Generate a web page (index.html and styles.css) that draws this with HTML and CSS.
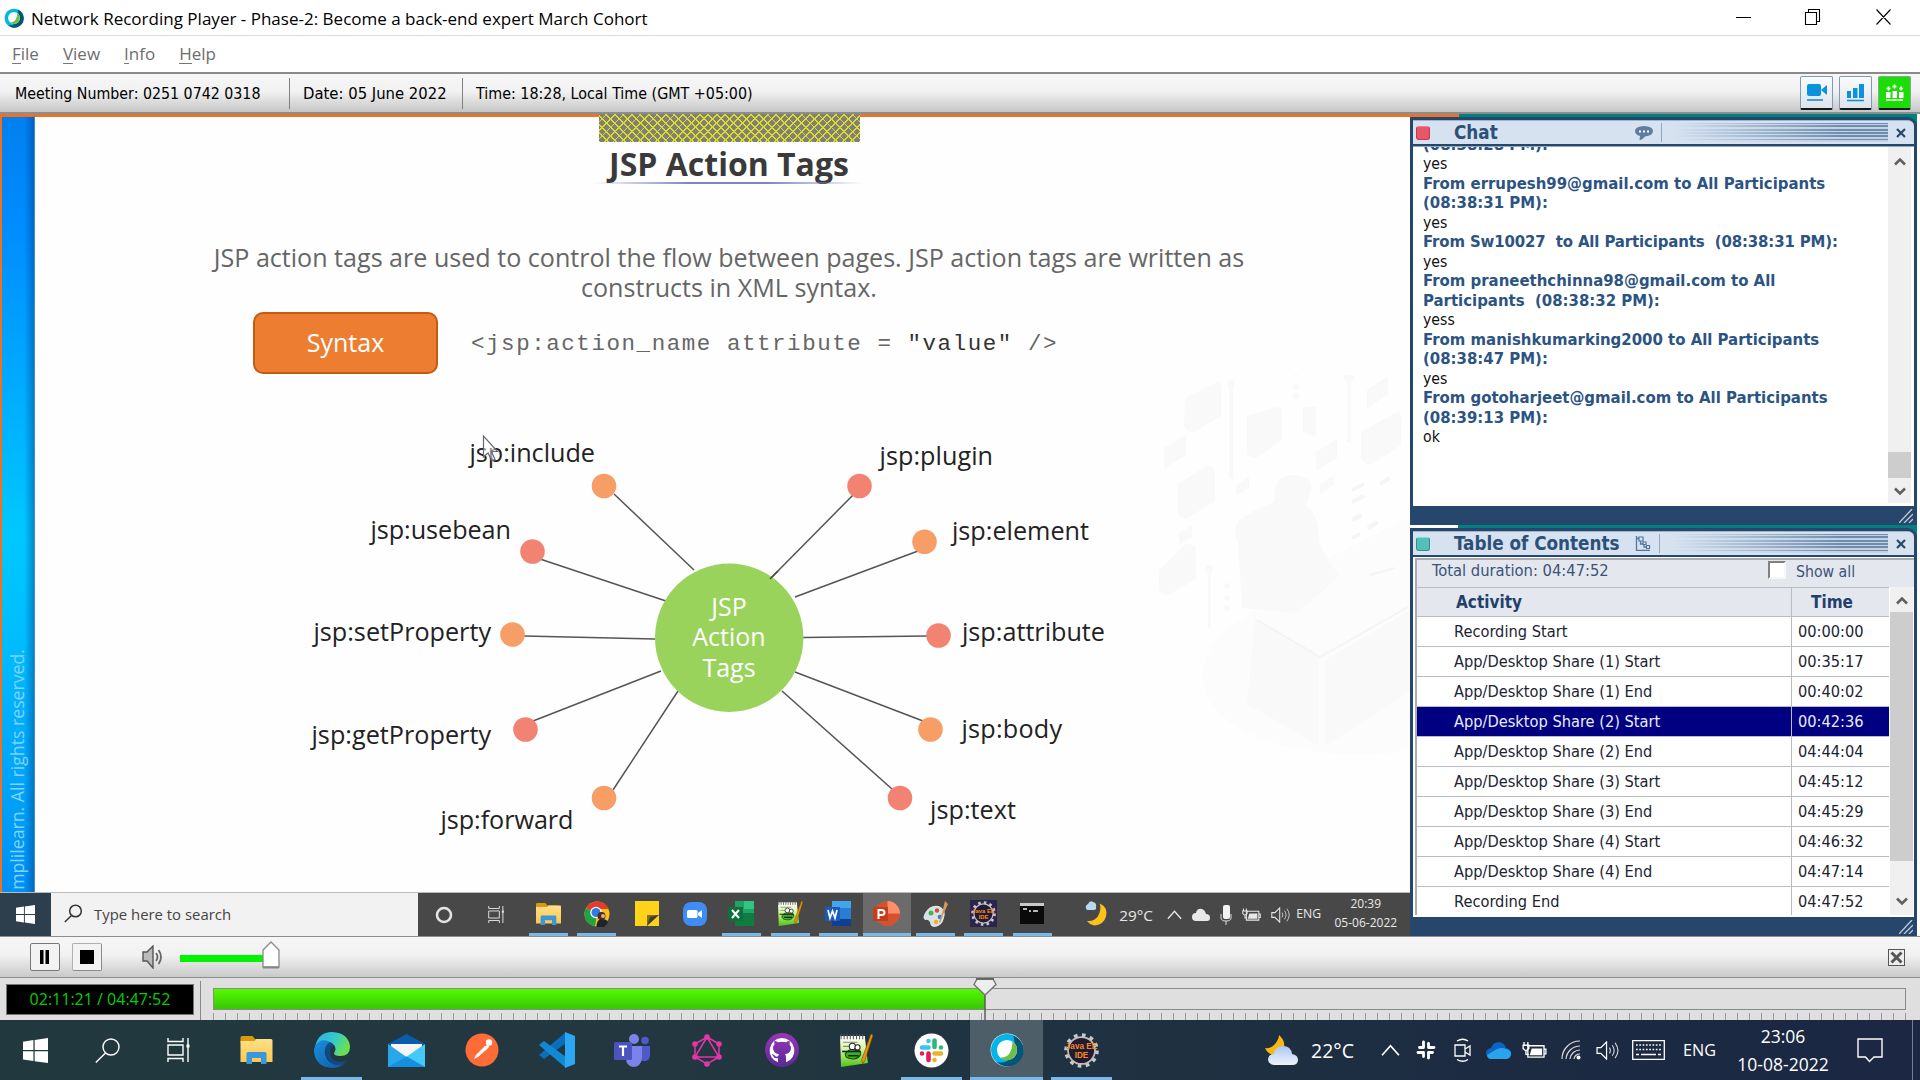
FILE: index.html
```html
<!DOCTYPE html>
<html lang="en">
<head>
<meta charset="utf-8">
<title>Network Recording Player</title>
<link rel="stylesheet" href="styles.css">
</head>
<body>
<svg class="defs" width="0" height="0">
  <defs>
    <linearGradient id="g-folder" x1="0" y1="0" x2="0" y2="1"><stop offset="0" stop-color="#ffe08a"/><stop offset="1" stop-color="#fbc84d"/></linearGradient>
    <linearGradient id="g-edge" x1="0" y1="0" x2="1" y2="0.4"><stop offset="0" stop-color="#2aaeea"/><stop offset=".6" stop-color="#35cbc8"/><stop offset="1" stop-color="#6be04e"/></linearGradient>
    <linearGradient id="g-edge2" x1="0" y1="0" x2="1" y2="1"><stop offset="0" stop-color="#1b8fe0"/><stop offset="1" stop-color="#0c59a4"/></linearGradient>
    <linearGradient id="g-cloud" x1="0" y1="0" x2="0" y2="1"><stop offset="0" stop-color="#a9c6f5"/><stop offset="1" stop-color="#f0f3f8"/></linearGradient>
    <linearGradient id="g-note" x1="0" y1="0" x2="0" y2="1"><stop offset="0" stop-color="#ffffff"/><stop offset=".4" stop-color="#d9f7a0"/><stop offset="1" stop-color="#4cc417"/></linearGradient>
    <linearGradient id="g-git" x1="0" y1="0" x2="0" y2="1"><stop offset="0" stop-color="#9a35b8"/><stop offset="1" stop-color="#5a2a94"/></linearGradient>
  </defs>
  <symbol id="i-windows" viewBox="0 0 24 24"><path d="M0 3.500 10 2v9.500H0zM11.200 1.800 24 0v11.500H11.200zM0 12.700h10V22L0 20.600zM11.200 12.700H24V24l-12.800-1.800z" fill="#fff"/></symbol>
  <symbol id="i-taskview" viewBox="0 0 24 24"><path d="M1 0v3.500h15V0M1 24v-3.500h15V24M1 7h15v10H1zM21 0v24" fill="none" stroke="currentColor" stroke-width="1.400"/><path d="M19.500 6.500h3v3h-3z" fill="currentColor"/></symbol>
  <symbol id="i-folder" viewBox="0 0 32 28"><path d="M0 1.500Q0 0 1.500 0H12l2.500 3H28v4H0z" fill="#d99a0b"/><path d="M0 5h14l2-2h14.500Q32 3 32 4.500V26H0z" fill="url(#g-folder)"/><path d="M6 28V17.500Q6 16 7.500 16h17q1.500 0 1.500 1.500V28h-5.500v-6h-9v6z" fill="#3a96dd"/></symbol>
  <symbol id="i-npp" viewBox="0 0 32 32"><path d="M0 2h24l3 26-26 4z" fill="url(#g-note)"/><path d="M0 2h24v3H0z" fill="#fff"/><path d="M1 0v5M4 0v5M7 0v5M10 0v5M13 0v5M16 0v5M19 0v5M22 0v5" stroke="#555" stroke-width="1"/><path d="M3 8h14M3 12h9" stroke="#888" stroke-width="1"/><path d="M5 19q5-6 10-3 6-1 5 4-3 5-9 4-6 0-6-5z" fill="#3fae1a" stroke="#184d08"/><circle cx="12" cy="12" r="3" fill="#fff" stroke="#222"/><circle cx="17" cy="13" r="2.500" fill="#fff" stroke="#222"/><path d="M2 17h18M8 21h10" stroke="#123" stroke-width="1.500"/><path d="m30 0 2 1-8 25-2 3-1-4z" fill="#e8940c" stroke="#7a4a08" stroke-width=".6"/></symbol>
  <symbol id="i-eclipse" viewBox="0 0 32 32"><circle cx="16" cy="16" r="14" fill="none" stroke="#c9c9c9" stroke-width="3.600" stroke-dasharray="3.300 4.030"/><circle cx="16" cy="16" r="12.300" fill="#231b33" stroke="#bdbdbd" stroke-width="1.600"/><text x="16" y="15" text-anchor="middle" class="gear-text">Java EE</text><text x="16" y="22.500" text-anchor="middle" class="gear-text">IDE</text></symbol>
  <symbol id="i-moon" viewBox="0 0 24 24"><path d="M15 0q9 4 7 14-3 10-13 10-5-1-8-5 8 1 12-5 4-7 2-14z" fill="#fcc21b"/></symbol>
  <symbol id="i-speaker" viewBox="0 0 24 20"><path d="M1 7v6h4l6 6V1L5 7z" fill="none" stroke="currentColor" stroke-width="1.300"/><path d="M14 7q2 3 0 6M17 4.500q4 5.500 0 11M20 2q6 8 0 16" fill="none" stroke="currentColor" stroke-width="1.200" stroke-opacity=".8"/></symbol>
  <symbol id="i-battery" viewBox="0 0 26 20"><path d="M6 5h17v12H6zM23 8.500h2v5h-2z" fill="none" stroke="currentColor" stroke-width="1.400"/><path d="M10 8h11v7H8z" fill="currentColor"/><path d="M2 1v4M6 1v4M1 4.500h6V8L4 10.500 1 8zM4 10v4h3" fill="none" stroke="currentColor" stroke-width="1.400"/></symbol>
  <symbol id="i-chev" viewBox="0 0 18 12"><path d="m1 10.500 8-9 8 9" fill="none" stroke="currentColor" stroke-width="1.600"/></symbol>
  <symbol id="i-arrow" viewBox="0 0 12 9"><path d="M1 7.500 6 2.500l5 5" fill="none" stroke="#606060" stroke-width="2.600"/></symbol>
  <symbol id="i-webex" viewBox="0 0 32 32"><circle cx="16" cy="16" r="15.500" fill="#d9eef5"/><circle cx="16" cy="16" r="15" fill="#00b5e8"/><path d="M22 2.500A15 15 0 1 1 6 27q9 3 14-5t2-19.500z" fill="#065477"/><circle cx="16" cy="16" r="9.500" fill="#fff"/><path d="M21 8A9.500 9.500 0 1 1 9.500 23q7 0 9.500-5t2-10z" fill="#6cc04a"/></symbol>
  <symbol id="i-grip" viewBox="0 0 14 14"><path d="M0 14 13 0M5 14l9-9M10 14l4-4" stroke="#b9c8d8" stroke-width="1.400"/></symbol>
  <symbol id="i-x" viewBox="0 0 10 10"><path d="m1 1 8 8M9 1 1 9" stroke="#26476b" stroke-width="2.200"/></symbol>
</svg>

<div class="screen">
  <header class="titlebar">
    <svg class="app-icon" viewBox="0 0 32 32" width="20" height="20"><use href="#i-webex"/></svg>
    <span class="app-title">Network Recording Player - Phase-2: Become a back-end expert March Cohort</span>
    <svg class="window-controls" width="160" height="16" viewBox="0 0 160 16"><path d="M0 8.500h15M69.500 3.500h11v12h-11zM72.500 3.500v-3h11v12h-3M140.500.5l14 15M154.500.5l-14 15" fill="none" stroke="#000" stroke-width="1.100"/></svg>
  </header>

  <nav class="menubar"><span><u>F</u>ile</span><span><u>V</u>iew</span><span><u>I</u>nfo</span><span><u>H</u>elp</span></nav>

  <div class="infobar">
    <span class="info info-number">Meeting Number: 0251 0742 0318</span>
    <span class="info info-date">Date: 05 June 2022</span>
    <span class="info info-time">Time: 18:28, Local Time (GMT +05:00)</span>
    <div class="tools">
      <span class="tool"><svg width="22" height="18" viewBox="0 0 22 18"><rect x="1" y="0" width="14" height="12" rx="2" fill="#0a93dc"/><path d="m15 6 6-5v10z" fill="#0a93dc"/><path d="M1 16h16" stroke="#0a93dc" stroke-width="1.600"/></svg></span>
      <span class="tool"><svg width="20" height="18" viewBox="0 0 20 18"><path d="M1 7h4v7H1zM7 4h4.500v10H7zM13 0h5v14h-5z" fill="#0a93dc"/><path d="M1 16.500h17" stroke="#0a93dc" stroke-width="1.600"/></svg></span>
      <span class="tool tool-on"><svg width="20" height="18" viewBox="0 0 20 18"><path d="M1 8h4.500v6H1zM7.500 7H12v7H7.500zM14 8h4.500v6H14z" fill="#fff"/><path d="M1 16h17M1.500 4.500h4M3.500 2.500v4M7.500 2.500h4M9.500.5v4M14 4.500h4M16 2.500v4" stroke="#fff" stroke-width="1.600"/></svg></span>
    </div>
  </div>

  <main class="stage">
    <section class="share">
      <div class="slide-row">
        <aside class="strip"><span>mplilearn. All rights reserved.</span></aside>
        <article class="slide">
          <div class="hatch"></div>
          <h1>JSP Action Tags</h1>
          <div class="rule"></div>
          <p class="lead">JSP action tags are used to control the flow between pages. JSP action tags are written as<br>constructs in XML syntax.</p>
          <div class="syntax"><span class="syntax-tag">Syntax</span><code>&lt;jsp:action_name attribute = <b>"value"</b> /&gt;</code></div>
          <svg class="diagram" viewBox="35 375 1375 517" width="1375" height="517">
            <g fill="#f9f9f9">
              <path d="M1185 398l32-16q4 0 4 4v30l-28 17q-8-2-9-8zM1247 416l30-9q5 0 5 5v28l-26 18q-9-1-9-6zM1361 432l38-21 2 6v28l-30 20q-9-2-10-8zM1178 484l28-18q8 0 9 5v30l-29 18q-8-2-8-6zM1159 570l28-27q9 2 9 6v30l-28 16q-9-2-9-7z"/>
              <path d="M1164 448l22-13v20l-22 14zM1367 390l21-14v18l-21 15zM1316 452l21-13v19l-21 13zM1236 486l13-10v12l-13 8zM1320 484l14-9v10l-14 9zM1179 533l13-8v12l-13 8zM1303 407h13v28q-8 2-13-3zM1229 387h4v92h-4zM1347 370h4v72h-4zM1208 572h3v56h-3z"/>
              <circle cx="1231" cy="384" r="4"/><circle cx="1349" cy="377" r="5"/><circle cx="1209" cy="569" r="4"/><circle cx="1296" cy="374" r="3"/><circle cx="1296" cy="387" r="3"/><circle cx="1296" cy="396" r="3"/><circle cx="1227" cy="586" r="3"/><circle cx="1227" cy="598" r="3"/><circle cx="1227" cy="608" r="3"/>
            </g>
            <path d="M1202 672q6-36 43-54l80-58 85-44v234q-60 10-117-2-90-20-91-76z" fill="#fcfcfc"/>
            <path d="M1275 502q-4-26 18-27 20 2 18 12l-5 20q12 4 13 34l9 20 12 14-22 20-22 18-54-5-4-66q-8-18 6-25 14-10 31-15zM1255 620l64 38v88l-72-42zM1325 660l85-50v82l-85 54z" fill="#f9f9f9"/>
            <path d="M1257 620l63 37 88-50M1370 575l25-7" fill="none" stroke="#f4f4f4" stroke-width="2"/>
            <path d="M1352 490l12-6M1352 502l12-6M1380 484l10-6M1352 520l10-5M1352 538l8-4M1368 528l10-6" stroke="#f5f5f5" stroke-width="4"/>
            <path d="M614 494 694 570M540 559l126 42M524 636l131 3M533 721l128-50M613 790l65-99M854 494l-84 85M918 551l-123 46M927 636l-124 1.500M923 721l-128-49M892 789 782 691" fill="none" stroke="#555" stroke-width="1.500"/>
            <circle cx="729.200" cy="637.700" r="74.200" fill="#9ad35c"/>
            <path d="m770 579 8-8" stroke="#444" stroke-width="1.500"/>
            <g fill="#f69e66"><circle cx="604" cy="486" r="12.300"/><circle cx="512.500" cy="634.500" r="12.300"/><circle cx="604" cy="798" r="12.300"/><circle cx="924.500" cy="541.800" r="12.300"/><circle cx="930.500" cy="729.500" r="12.300"/></g>
            <g fill="#f28373"><circle cx="532.500" cy="551.500" r="12.300"/><circle cx="525.500" cy="729.500" r="12.300"/><circle cx="859.500" cy="486" r="12.300"/><circle cx="938.500" cy="635.500" r="12.300"/><circle cx="900" cy="798" r="12.300"/></g>
            <g class="hub"><text x="729" y="615.500">JSP</text><text x="729" y="646">Action</text><text x="729" y="676.700">Tags</text></g>
            <g class="label">
              <text x="469.500" y="462" textLength="125.500">jsp:include</text>
              <text x="370.500" y="539" textLength="140.500">jsp:usebean</text>
              <text x="313.500" y="641" textLength="177.500">jsp:setProperty</text>
              <text x="311.500" y="744" textLength="179.500">jsp:getProperty</text>
              <text x="440.500" y="828.500" textLength="133">jsp:forward</text>
              <text x="879.500" y="464.500" textLength="113.500">jsp:plugin</text>
              <text x="952" y="540" textLength="137">jsp:element</text>
              <text x="962" y="640.500" textLength="143">jsp:attribute</text>
              <text x="961.500" y="737.500" textLength="100.500">jsp:body</text>
              <text x="930" y="819" textLength="86">jsp:text</text>
            </g>
            <path d="M483.500 436v21l4.500-4 4 8 3-1.500-3.500-8h6z" fill="#fff" fill-opacity=".5" stroke="#667" stroke-width="1.200"/>
          </svg>
        </article>
      </div>

      <div class="remote-bar">
        <span class="remote-start"><svg width="19" height="19"><use href="#i-windows"/></svg></span>
        <span class="remote-search"><svg width="19" height="19" viewBox="0 0 19 19"><circle cx="11.500" cy="7" r="5.800" fill="none" stroke="#333" stroke-width="1.500"/><path d="M7.500 11.500.8 18" stroke="#333" stroke-width="1.500"/></svg>Type here to search</span>
        <span class="remote-wide"><svg width="18" height="18"><circle cx="9" cy="9" r="7" fill="none" stroke="#e4e4e4" stroke-width="2.600"/></svg></span>
        <span class="remote-wide"><svg width="19" height="17"><use href="#i-taskview"/></svg></span>
        <span class="remote-app open"><svg width="25" height="22"><use href="#i-folder"/></svg></span>
        <span class="remote-app open"><svg width="26" height="26" viewBox="0 0 26 26"><circle cx="13" cy="13" r="12.500" fill="#fbc116"/><path d="M13 13 2 7A12.500 12.500 0 0 1 24.500 8H13z" fill="#e33b2e"/><path d="M13 13 2 7a12.500 12.500 0 0 0 9 18.300z" fill="#1ea446"/><circle cx="12" cy="11.500" r="5.800" fill="#fff"/><circle cx="12" cy="11.500" r="4.500" fill="#2d7ce8"/><circle cx="17.500" cy="15" r="4" fill="#4a2c22"/><path d="M12.500 26q0-8 5.500-8t6 4l-4 4z" fill="#1c2430"/><circle cx="19" cy="15" r="2" fill="#dfaf90"/></svg></span>
        <span class="remote-app nudge"><svg width="24" height="25" viewBox="0 0 24 25"><path d="M0 0h24v25H0z" fill="#ffd21c"/><path d="M12 25V14h12z" fill="#3d3d3d"/><path d="M12 25V14h12l-9 2z" fill="#866e13"/></svg></span>
        <span class="remote-app nudge"><svg width="24" height="24" viewBox="0 0 24 24"><rect width="24" height="24" rx="8" fill="#3f8cf5"/><rect x="4" y="8" width="10.500" height="8" rx="1.500" fill="#fff"/><path d="m15 11 4-3v8l-4-3z" fill="#fff"/></svg></span>
        <span class="remote-app open"><svg width="27" height="25" viewBox="0 0 27 25"><path d="M7 0h19v25H7z" fill="#21a366"/><path d="M7 12h19v13H7z" fill="#107c41"/><path d="M16 0h10v8H16z" fill="#33c481"/><path d="M0 6h15v14H0z" fill="#0f703b"/><path d="m4 9 7 8M11 9l-7 8" stroke="#fff" stroke-width="2"/></svg></span>
        <span class="remote-app open"><svg width="25" height="27"><use href="#i-npp"/></svg></span>
        <span class="remote-app open"><svg width="27" height="25" viewBox="0 0 27 25"><path d="M7 0h19v25H7z" fill="#2b7cd3"/><path d="M7 0h19v7H7z" fill="#41a5ee"/><path d="M7 18h19v7H7z" fill="#103f91"/><path d="M0 6h15v14H0z" fill="#185abd"/><path d="m3 9 2 8 2.500-7 2.500 7 2-8" fill="none" stroke="#fff" stroke-width="1.700"/></svg></span>
        <span class="remote-app open current"><svg width="27" height="25" viewBox="0 0 27 25"><circle cx="14.500" cy="12.500" r="12.500" fill="#d35230"/><path d="M14.500 0A12.500 12.500 0 0 1 27 12.500H14.500z" fill="#ff8f6b"/><path d="M0 6h15v14H0z" fill="#c43e1c"/><path d="M5.500 18V9h3q3 0 3 2.500T8.500 14h-3" fill="none" stroke="#fff" stroke-width="2"/></svg></span>
        <span class="remote-app open"><svg width="27" height="26" viewBox="0 0 27 26"><path d="M3 12Q8 3 17 5q8 4 5 12-2 8-9 9-5 0-5-5-2-3-5-2-3-2 0-7z" fill="#d9e2e6"/><circle cx="9" cy="12" r="2.500" fill="#4caf50"/><circle cx="15" cy="9.500" r="2.200" fill="#d84a3a"/><circle cx="18" cy="16" r="2.300" fill="#2f80d0"/><circle cx="14" cy="21" r="2.200" fill="#f2b21b"/><path d="m23 0 3 3-5 11-3 8-1-1 3-9z" fill="#d79a56"/></svg></span>
        <span class="remote-app open"><svg width="27" height="27" viewBox="0 0 27 27"><path d="M0 0h27v27H0z" fill="#2b2350"/><svg x="1" y="1" width="25" height="25"><use href="#i-eclipse"/></svg></svg></span>
        <span class="remote-app open"><svg width="24" height="21" viewBox="0 0 24 21"><path d="M0 0h24v21H0z" fill="#0a0a0a"/><path d="M0 0h24v3H0z" fill="#c8c8c8"/><path d="M3 6h4M9 8h2M13 8h5" stroke="#eee" stroke-width="1.500"/></svg></span>
        <span class="remote-weather"><svg width="24" height="29" viewBox="0 0 24 29"><svg y="1" x="1" width="22" height="27"><use href="#i-moon"/></svg><path d="M2 10q-3-4 1-6 2-4 5-2 4 1 3 5 1 3-2 3z" fill="#b9d9ec"/></svg><span>29°C</span></span>
        <span class="remote-tray">
          <svg width="15" height="10"><use href="#i-chev"/></svg>
          <svg width="18" height="14" viewBox="0 0 18 14"><path d="M4 13q-4 0-4-4t4-4q1-5 6-4 3 1 4 5 4 0 4 4 0 3-3 3z" fill="#e8e8e8"/></svg>
          <svg width="12" height="20" viewBox="0 0 12 20"><rect x="3" width="7" height="14" rx="2" fill="#f2f2f2"/><path d="M1 9v4q0 3 5 3t5-3V9M6 16v4" fill="none" stroke="#ddd"/></svg>
          <svg width="19" height="16"><use href="#i-battery"/></svg>
          <svg width="19" height="16"><use href="#i-speaker"/></svg>
        </span>
        <span class="remote-lang">ENG</span>
        <span class="remote-clock">20:39<br>05-06-2022</span>
      </div>
    </section>

    <aside class="panels">
      <section class="panel chat">
        <header class="panel-head">
          <i class="dot dot-red"></i><h2>Chat</h2>
          <svg class="head-icon" width="18" height="14" viewBox="0 0 18 14"><path d="M9 0q9 .5 9 5t-8 5.500Q7 14 4.500 14L5 10Q0 8.500 0 5q0-4.500 9-5z" fill="#5f7d9e"/><path d="M4 5.500h2M8 5.500h2M12 5.500h2" stroke="#fff" stroke-width="2"/></svg>
          <i class="bars"></i><svg class="close" width="10" height="10"><use href="#i-x"/></svg>
        </header>
        <div class="chat-body">
          <div class="messages">
            <div class="message-list">
              <b>(08:38:28 PM):</b><span>yes</span>
              <b>From errupesh99@gmail.com to All Participants<br>(08:38:31 PM):</b><span>yes</span>
              <b class="tight">From Sw10027&nbsp; to All Participants&nbsp; (08:38:31 PM):</b><span>yes</span>
              <b>From praneethchinna98@gmail.com to All<br>Participants&nbsp; (08:38:32 PM):</b><span>yess</span>
              <b>From manishkumarking2000 to All Participants<br>(08:38:47 PM):</b><span>yes</span>
              <b>From gotoharjeet@gmail.com to All Participants<br>(08:39:13 PM):</b><span>ok</span>
            </div>
          </div>
          <div class="scroll chat-scroll"><svg width="12" height="9"><use href="#i-arrow"/></svg><i></i><svg class="down" width="12" height="9"><use href="#i-arrow"/></svg></div>
        </div>
        <footer class="panel-foot"><svg width="14" height="14"><use href="#i-grip"/></svg></footer>
      </section>

      <section class="panel toc">
        <header class="panel-head">
          <i class="dot dot-teal"></i><h2>Table of Contents</h2>
          <svg class="head-icon toc-icon" width="16" height="15" viewBox="0 0 16 15"><path d="M1.500 0v14.500H15M1 2.500h4M5.500 5v3h3M9 8v3h3" fill="none" stroke="#54779c" stroke-width="1.300"/><path d="M4 1h4v4H4zM8 6h3v2.500H8zM11.500 9.500h3v3h-3z" fill="#dce6f2" stroke="#54779c" stroke-width="1.200"/></svg>
          <i class="bars"></i><svg class="close" width="10" height="10"><use href="#i-x"/></svg>
        </header>
        <div class="toc-body">
          <div class="summary"><span class="total">Total duration: 04:47:52</span><i class="check"></i><span class="show">Show all</span></div>
          <div class="toc-main">
            <div class="rows">
              <div class="row head"><span>Activity</span><span>Time</span></div>
              <div class="row"><span>Recording Start</span><span>00:00:00</span></div>
              <div class="row"><span>App/Desktop Share (1) Start</span><span>00:35:17</span></div>
              <div class="row"><span>App/Desktop Share (1) End</span><span>00:40:02</span></div>
              <div class="row selected"><span>App/Desktop Share (2) Start</span><span>00:42:36</span></div>
              <div class="row"><span>App/Desktop Share (2) End</span><span>04:44:04</span></div>
              <div class="row"><span>App/Desktop Share (3) Start</span><span>04:45:12</span></div>
              <div class="row"><span>App/Desktop Share (3) End</span><span>04:45:29</span></div>
              <div class="row"><span>App/Desktop Share (4) Start</span><span>04:46:32</span></div>
              <div class="row"><span>App/Desktop Share (4) End</span><span>04:47:14</span></div>
              <div class="row"><span>Recording End</span><span>04:47:52</span></div>
            </div>
            <div class="scroll toc-scroll"><svg width="12" height="9"><use href="#i-arrow"/></svg><i></i><svg class="down" width="12" height="9"><use href="#i-arrow"/></svg></div>
          </div>
        </div>
        <footer class="panel-foot"><svg width="14" height="14"><use href="#i-grip"/></svg></footer>
      </section>
    </aside>
  </main>

  <div class="controls">
    <span class="button"><svg width="12" height="14"><path d="M1 0h3.500v14H1zM6.500 0H10v14H6.500z"/></svg></span>
    <span class="button"><svg width="14" height="14"><path d="M0 0h14v14H0z"/></svg></span>
    <svg class="volume-icon" width="22" height="24" viewBox="0 0 22 24"><path d="M1 7v9h4l6 7V1L5 7z" fill="#bbb" stroke="#555" stroke-width="1.400"/><path d="M14 8q3 4 0 8M16.500 5q5 7 0 14" fill="none" stroke="#666" stroke-width="1.800"/></svg>
    <span class="volume"></span>
    <svg class="volume-thumb" width="18" height="28" viewBox="0 0 18 28"><path d="M1 9 9 1l8 8v17H1z" fill="#fff" stroke="#8a8a8a" stroke-width="1.300"/><path d="M1 26.500h16" stroke="#888" stroke-width="2"/></svg>
    <span class="dock-close"><svg width="13" height="13" viewBox="0 0 13 13"><path d="m1.500 1.500 10 10M11.500 1.500l-10 10" stroke="#555" stroke-width="3"/></svg></span>
  </div>

  <div class="timeline">
    <span class="time">02:11:21 / 04:47:52</span>
    <div class="seek">
      <div class="trough"><div class="fill" style="width:45.600%"></div></div>
      <div class="ticks"></div>
      <svg class="playhead" width="24" height="42" viewBox="0 0 24 42"><path d="M12 17v25" stroke="#555" stroke-width="1.400"/><path d="M1 6.500 4 1h16l3 5.500L12 17z" fill="#eee" stroke="#777" stroke-width="1.400"/><path d="M3 1h18" stroke="#666" stroke-width="2"/></svg>
    </div>
  </div>

  <footer class="taskbar">
    <span class="sys"><svg width="25" height="25"><use href="#i-windows"/></svg></span>
    <span class="sys"><svg width="25" height="25" viewBox="0 0 25 25"><circle cx="16" cy="9" r="8" fill="none" stroke="#fff" stroke-width="1.400"/><path d="M10.500 15 .8 24.500" stroke="#fff" stroke-width="1.400"/></svg></span>
    <span class="sys"><svg width="26" height="24"><use href="#i-taskview"/></svg></span>
    <span class="app"><svg width="33" height="28"><use href="#i-folder"/></svg></span>
    <span class="app open"><svg width="36" height="36" viewBox="0 0 36 36"><path d="M1 15Q4 0 18 0q17 1 18 15 0 9-10 9-6 0-6-3 3-4 0-8-5-5-12-3-4 1-7 5z" fill="url(#g-edge)"/><path d="M1 14q6-9 15-4-6 4-5 12 3 12 16 11l4-2q-5 5-13 5Q2 35 0 20q0-4 1-6z" fill="url(#g-edge2)"/><path d="M16 10q-6 4-4 13 4 11 15 10 3-1 6-5-3 2-8 2-9-1-9-10 0-4 3-6 0-3-3-4z" fill="#114a8b"/></svg></span>
    <span class="app"><svg width="37" height="33" viewBox="0 0 37 33"><path d="M0 10 18.500 0 37 10v10H0z" fill="#0b5cad"/><path d="M3 10h31v9L18.500 24 3 19z" fill="#f5f5f5"/><path d="m0 10 18.500 13L37 10v23H0z" fill="#28a8ea"/><path d="m18.500 22.500 18.500-12V33z" fill="#50d9ff" opacity=".7"/><path d="m0 33 18.500-10.500L37 33z" fill="#1490df"/></svg></span>
    <span class="app"><svg width="34" height="34" viewBox="0 0 34 34"><circle cx="17" cy="17" r="16.500" fill="#ff6c37"/><path d="m9 26 2-4 9-9 2.500 2.500L13 24z" fill="#fff"/><circle cx="24" cy="9.500" r="3.200" fill="#fff"/><path d="m19 13.500 4-1.500 1 2-3 3z" fill="#fff"/></svg></span>
    <span class="app"><svg width="36" height="36" viewBox="0 0 36 36"><path d="M27 0v11L5 27l-5-4z" fill="#0a6ebd"/><path d="M27 36V25L5 9l-5 4z" fill="#1287d4"/><path d="m26 0 10 4v28l-10 4z" fill="#2ba7f4"/></svg></span>
    <span class="app"><svg width="36" height="33" viewBox="0 0 36 33"><circle cx="20" cy="5" r="5" fill="#7b83eb"/><circle cx="31" cy="6.500" r="3.800" fill="#5059c9"/><path d="M24 12h12v10q-1 6-7 5h-5z" fill="#5059c9"/><path d="M12 12h16v12q-1 9-9 9-7-1-7-9z" fill="#7b83eb"/><rect y="8" width="18" height="18" rx="1.500" fill="#4b53bc"/><path d="M5 12.500h8M9 12.500V22" stroke="#fff" stroke-width="2.200"/></svg></span>
    <span class="app"><svg width="30" height="33" viewBox="0 0 30 33"><path d="m15 3 12 7v13l-12 7-12-7V10zM15 3 3 23h24z" fill="none" stroke="#e535ab" stroke-width="1.500"/><g fill="#e535ab"><circle cx="15" cy="3" r="2.800"/><circle cx="27" cy="10" r="2.800"/><circle cx="27" cy="23" r="2.800"/><circle cx="15" cy="30" r="2.800"/><circle cx="3" cy="23" r="2.800"/><circle cx="3" cy="10" r="2.800"/></g></svg></span>
    <span class="app"><svg width="34" height="34" viewBox="0 0 34 34"><circle cx="17" cy="17" r="17" fill="url(#g-git)"/><path d="M17 5a12.500 12.500 0 0 0-4 24.300v-4q-4 .5-5-2.500l-1.500-1.500q2-.5 3.500 1.500 1 1.500 3 .5l1-2q-6-1-6-6.500 0-2 1.500-3.500-.5-2 0-3.500 1.500 0 3.500 1.500 4-1 8 0 2-1.500 3.500-1.500.5 2 0 3.500 1.500 1.500 1.500 3.500 0 5.500-6 6.500 1 1 1 3v5A12.500 12.500 0 0 0 17 5z" fill="#fff"/></svg></span>
    <span class="app"><svg width="33" height="33"><use href="#i-npp"/></svg></span>
    <span class="app open"><svg width="35" height="35" viewBox="0 0 35 35"><circle cx="17.500" cy="17.500" r="17" fill="#fff"/><g fill="none" stroke-width="4.600" stroke-linecap="round"><path d="M14.500 8v0M8 14.500h6.500" stroke="#36c5f0"/><path d="M20.500 7.500v6.500M27 14.500v0" stroke="#2eb67d"/><path d="M20.500 27v0M20.500 20.500H27" stroke="#ecb22e"/><path d="M14.500 20.500V27M8 20.500v0" stroke="#e01e5a"/></g></svg></span>
    <span class="app open active"><svg width="34" height="34"><use href="#i-webex"/></svg></span>
    <span class="app open"><svg width="35" height="35"><use href="#i-eclipse"/></svg></span>
    <div class="tray">
      <span class="weather"><svg width="34" height="31" viewBox="0 0 34 31"><path d="M14 0q8 7 4 16L8 20Q2 18 0 13q6 1 10-4t4-9z" fill="#f9b710"/><path d="M9 30q-6-1-6-6 1-5 6-5 1-8 9-8t9 8q6 1 6 6t-6 5z" fill="url(#g-cloud)"/></svg>22°C</span>
      <span class="t-chev"><svg width="19" height="13"><use href="#i-chev"/></svg></span>
      <span class="t-slack"><svg width="20" height="20" viewBox="0 0 20 20"><path d="M7.500 2v5.500M12.500 3.500v4M3.500 7.500h4M12.500 7.500H18M2 12.500h5.500M12.500 12.500h4M7.500 12.500v4M12.500 12.500V18" stroke="#fff" stroke-width="2.800" stroke-linecap="round"/></svg></span>
      <span class="t-cam"><svg width="18" height="24" viewBox="0 0 18 24"><path d="M1 7h10v11H1zM11 11l5-3v9l-5-3M3 3q6-3.500 11 0M3 21.500q6 3.500 11 0" fill="none" stroke="#fff" stroke-width="1.300"/></svg></span>
      <span class="t-drive"><svg width="25" height="17" viewBox="0 0 25 17"><path d="M5 16q-5-1-5-5t5-5q2-6 8-6 6 1 7 6 5 1 5 5t-4 5z" fill="#0a64c0"/><path d="M4 17q-3-1-3-4l10-6q5-2 9 0 5 1 5 5t-4 5z" fill="#2aa3ee"/></svg></span>
      <span class="t-battery"><svg width="25" height="19"><use href="#i-battery"/></svg></span>
      <span class="t-wifi"><svg width="20" height="20" viewBox="0 0 20 20"><path d="M1 19A18 18 0 0 1 19 1M5 19A14 14 0 0 1 19 6M9 19a10 10 0 0 1 10-9M13 19q1-5 6-5" fill="none" stroke="#ddd" stroke-width="1.200"/><circle cx="17.500" cy="17.500" r="2" fill="#fff"/></svg></span>
      <span class="t-speaker"><svg width="23" height="19"><use href="#i-speaker"/></svg></span>
      <span class="t-keyboard"><svg width="33" height="20" viewBox="0 0 33 20"><path d="M.7.7h31.600v18.600H.7z" fill="none" stroke="#fff" stroke-width="1.300"/><path d="M4 5h25M4 9.500h25" stroke="#fff" stroke-width="1.600" stroke-dasharray="1.700 1.600"/><path d="M4 14.500h3M9 14.500h15M26 14.500h3" stroke="#fff" stroke-width="1.500"/></svg></span>
      <span class="t-lang">ENG</span>
      <span class="t-clock">23:06<br>10-08-2022</span>
      <span class="t-note"><svg width="26" height="25" viewBox="0 0 26 25"><path d="M1 1h24v18h-8l-4.500 4.500L8.500 19H1z" fill="none" stroke="#fff" stroke-width="1.400"/></svg></span>
      <i class="peek"></i>
    </div>
  </footer>
</div>
</body>
</html>
```
FILE: styles.css
```css
* { box-sizing: border-box; }
body { margin: 0; background: #fff; overflow: hidden; }
svg { display: block; flex: none; }
.defs { position: absolute; }
h1, h2, p { margin: 0; }

.screen {
  width: 1920px; height: 1080px;
  display: grid; grid-template-rows: 36px 36px 42px 822px 42px 42px 60px;
  font-family: "Open Sans", "Noto Sans", sans-serif;
  color: #000;
}

/* Window chrome */
.titlebar { display: flex; align-items: center; padding: 0 28px 0 4px; border-bottom: 1px solid #dedede; }
.app-icon { margin: 0 7px 0 0; }
.app-title { flex: 1; font-size: 17.03px; line-height: 34px; padding-top: 2px; }
.window-controls { margin-right: -4px; margin-top: -2px; }
.menubar { display: flex; gap: 24px; padding: 5px 12px; font-size: 17px; line-height: 26px; color: #6d6d6d; }
.menubar u { text-decoration: none; height: 23px; display: inline-block; line-height: 26px; border-bottom: 1.500px solid #777; }

.infobar {
  display: flex; align-items: center; padding: 0 9px 0 0;
  border-top: 2px solid #8a8a8a; border-bottom: 2px solid #8d8d8d;
  background: linear-gradient(#f6f6f6 0, #f2f2f2 45%, #c6c6c6 100%);
  font-family: "DejaVu Sans Condensed", "DejaVu Sans", sans-serif; font-size: 15.8px; font-stretch: condensed;
}
.info { height: 31px; line-height: 32px; padding-left: 13px; }
.info-number { width: 290px; padding-left: 15px; border-right: 1px solid #808080; }
.info-date { width: 173px; border-right: 1px solid #808080; font-size: 16.5px; }
.info-time { font-size: 15.9px; }
.tools { display: flex; gap: 6px; margin-left: auto; }
.tool {
  width: 33px; height: 34px; display: grid; place-items: center;
  border: 1px solid #7f9ab5; border-bottom: 2px solid #101820; border-radius: 2px;
  background: linear-gradient(#fafbff, #dfe3ea);
}
.tool-on { background: #1ddd08; border-color: #7fb08a; border-bottom-color: #101820; }

/* Shared screen */
.stage { display: grid; grid-template-columns: 1410px 510px; }
.share { display: grid; grid-template-rows: 779px 43px; min-width: 0; }
.slide-row { display: grid; grid-template-columns: 35px 1375px; min-height: 0; border-bottom: 1px solid #bbb; }
.strip {
  border-left: 2px solid #f0701e; border-top: 3px solid #f0701e; border-right: 1px solid #3b8fc8;
  background:
    linear-gradient(90deg, transparent 70%, rgba(0, 50, 120, .4)),
    linear-gradient(#0080f0, #008cff 14%, #00c8ff 54%, #00bcff 68%, #0090f4 100%);
  display: flex; align-items: flex-end; justify-content: flex-start; padding: 0 0 2px 4px;
}
.strip span { writing-mode: vertical-rl; transform: rotate(180deg); font-size: 17.7px; line-height: 22px; color: #7fd3fb; white-space: nowrap; }
.slide { display: flex; flex-direction: column; align-items: center; min-height: 0; overflow: hidden; background: linear-gradient(#e8742c, #e8742c) 0 0 / 100% 3px no-repeat #fefefe; }
.hatch {
  width: 261px; height: 28px; margin-left: 14px; flex: none;
  background:
    repeating-linear-gradient(45deg, #dede1c 0 1.300px, transparent 1.300px 6px),
    repeating-linear-gradient(-45deg, #dede1c 0 1.300px, transparent 1.300px 6px), #7f7f7f;
}
.slide h1 { margin-left: 13px; height: 40px; line-height: 44px; font-size: 32px; color: #3a3a3a; }
.rule { width: 270px; height: 2px; margin: 0 0 1px 10px; flex: none; background: linear-gradient(90deg, transparent, #8085c0 35%, #8085c0 65%, transparent); }
.lead { margin: 57px 0 0 13px; height: 61px; font-size: 25.1px; line-height: 30.3px; text-align: center; color: #666; white-space: nowrap; }
.syntax { display: flex; align-items: center; align-self: stretch; gap: 33px; margin: 8px 0 1px 218px; height: 63px; flex: none; }
.syntax-tag { width: 185px; height: 62px; display: grid; place-items: center; border: 2px solid #c55a11; border-radius: 10px; background: #ed7d31; color: #fff; font-size: 25px; line-height: 56px; padding-bottom: 2px; }
.syntax code { font: 22.5px "Liberation Mono", monospace; letter-spacing: 1.55px; color: #666; white-space: pre; padding-top: 2px; }
.syntax code b { font-weight: normal; color: #333; }
.diagram { font-size: 25.2px; }
.diagram .label { fill: #222; }
.diagram .hub { fill: #fff; text-anchor: middle; font-size: 25px; }
.gear-text { font: bold 7.500px "Liberation Sans", sans-serif; fill: #f78b1f; }

/* Taskbar inside the shared screen */
.remote-bar { display: flex; align-items: stretch; background: #484848; color: #e8e8e8; font-size: 15px; }
.remote-start { width: 51px; display: grid; place-items: center; background: #2d3f4d; }
.remote-search { width: 367px; display: flex; align-items: center; gap: 11px; padding: 0 0 2px 13px; background: #f2f2f2; color: #444; font-size: 14.9px; }
.remote-wide { width: 52px; display: grid; place-items: center; color: #ddd; }
.remote-wide + .remote-app { margin-left: 2px; }
.remote-app { width: 48.4px; display: grid; place-items: center; background: linear-gradient(#76b9ed, #76b9ed) 50% 40px / 0 3px no-repeat; padding-bottom: 2px; }
.remote-app.open { background-size: 39px 3px; }
.remote-app.current { background-color: #6b6b6b; background-size: 100% 3px; }
.remote-app.nudge { padding-left: 4px; }
.remote-weather { display: flex; align-items: center; gap: 10px; margin-left: 29px; width: 82px; font-size: 15.3px; }
.remote-tray { display: flex; align-items: center; gap: 10px; width: 124px; }
.remote-lang { margin-left: 5px; width: 30px; font-size: 12.2px; line-height: 41px; }
.remote-clock { width: 79px; font-size: 12px; line-height: 19px; text-align: center; padding-top: 1px; white-space: nowrap; }

/* Side panels */
.panels {
  display: grid; grid-template-rows: 408px 408px; gap: 3px; padding: 3px 3px 0 0;
  background:
    linear-gradient(#e8742c, #e8742c) 0 0 / 49px 3px no-repeat,
    linear-gradient(#fff, #fff) 0 0 / 48px 100% no-repeat,
    linear-gradient(#fff, #fff) 100% 0 / 3px 100% no-repeat, #008080;
  font-family: "DejaVu Sans Condensed", "DejaVu Sans", sans-serif; font-stretch: condensed;
}
.panel { display: grid; grid-template-rows: 24px 1fr 19px; padding: 3px 3px 0; background: #26476b; min-height: 0; border-top-right-radius: 9px; }
.panel-head { display: flex; align-items: center; background: #d6e2f0; border-top: 1px solid #9db4cc; border-top-right-radius: 6px; }
.dot { width: 14px; height: 14px; margin-left: 3px; border-radius: 3px; flex: none; }
.dot-red { background: #e8566a; border: 1px solid #c43950; border-top-color: #f08090; }
.dot-teal { background: #52bfb8; border: 1px solid #318f8b; border-top-color: #80dcd4; }
.panel h2 { width: 181px; margin-left: 24px; font-size: 18.7px; line-height: 22px; color: #2c5078; white-space: nowrap; }
.bars {
  flex: 1; align-self: stretch; margin: 2px 8px 2px 8px; border-left: 1px solid #8fa7c0;
  background: linear-gradient(90deg, #d6e2f0 5%, transparent 80%), repeating-linear-gradient(#6d8cae 0 1px, #c2d2e3 1px 2.500px, #6d8cae 2.500px 3.300px);
}
.close { margin-right: 8px; }
.panel-foot { display: flex; justify-content: flex-end; align-items: flex-start; padding: 3px 1px 0; }

.chat-body { display: grid; grid-template-columns: 1fr 23px; margin-top: 2px; padding: 0 3px 3px 0; background: #fff; min-height: 0; border-top: 1px solid #8fa7c0; }
.messages { display: flex; flex-direction: column; overflow: hidden; min-height: 0; font-size: 15.7px; line-height: 19.5px; }
.message-list { display: flex; flex-direction: column; margin: -12.500px 0 0 10px; white-space: nowrap; color: #111; }
.message-list b { font-size: 16.6px; color: #2c5482; }
.message-list .tight { letter-spacing: -.12px; }
.scroll { display: flex; flex-direction: column; align-items: center; background: #f0f0f0; padding: 10px 0 7px; }
.scroll i { width: 100%; background: #cdcdcd; }
.scroll .down { transform: rotate(180deg); margin-top: auto; }
.chat-scroll i { height: 26px; margin-top: 286px; }

.toc-body { display: flex; flex-direction: column; margin-top: 2px; background: #fff; padding: 1px 0 2px 2px; min-height: 0; }
.summary { height: 29px; display: flex; flex: none; border: 2px solid #a9adb3; border-width: 2px 0 0 2px; background: #e4e8ee; font-size: 16.4px; line-height: 21px; color: #3a5378; }
.total { width: 351px; padding-left: 15px; }
.check { width: 18px; height: 18px; margin: 1px 10px 0 0; border: 2px solid #808080; border-right-color: #f6f6f6; border-bottom-color: #f6f6f6; background: #fff; }
.show { font-size: 15.7px; line-height: 24px; }
.toc-main { display: grid; grid-template-columns: 1fr 23px; gap: 1px; padding-right: 1px; flex: 1; min-height: 0; }
.rows { overflow: hidden; border-left: 2px solid #a9adb3; min-height: 0; }
.row { height: 30.07px; display: grid; grid-template-columns: 375px 1fr; border-bottom: 1px solid #b9bcc0; font-size: 16.25px; line-height: 30px; color: #1b2433; background: #fff; }
.row span:first-child { padding-left: 37px; border-right: 1px solid #b9bcc0; }
.row span:last-child { padding-left: 6px; }
.row.head { height: 29.5px; border-top: 1px solid #b9bcc0; background: #e4e8ee; color: #1f416b; font-weight: bold; font-size: 17px; line-height: 28px; }
.row.head span:first-child { padding-left: 39px; }
.row.head span:last-child { padding-left: 19px; }
.row.selected { background: #000080; color: #e8ecf8; }
.toc-scroll { padding: 9px 0 9px; }
.toc-scroll i { height: 249px; margin-top: 7px; }

/* Player controls */
.controls {
  display: flex; align-items: center; padding: 0 15px 0 30px;
  border-top: 1px solid #8d8d8d; border-bottom: 1px solid #8d8d8d;
  background: linear-gradient(#f6f6f6 0, #f2f2f2 45%, #c9c9c9 100%);
}
.button { width: 30px; height: 28px; margin-right: 12px; display: grid; place-items: center; border: 1.500px solid #777; border-radius: 2px; background: #f3f3f3; }
.button + .button { border-color: #b0b0b0 #888 #888 #b0b0b0; }
.volume-icon { margin-left: 28px; }
.volume { width: 83px; height: 7px; margin: 3px 0 0 16px; background: #00f400; }
.volume-thumb { margin-left: -1px; margin-top: -4px; }
.dock-close { width: 17px; height: 17px; margin-left: auto; display: grid; place-items: center; border: 1.500px solid #555; background: #eee; }

.timeline { display: flex; background: #dfdfdf; padding-left: 6px; }
.time {
  width: 188px; height: 31px; margin: 6px 6px 0 0; flex: none; border: 1px solid #777; background: #000; color: #00d000;
  font: 16px/29px "Open Sans", "Noto Sans", sans-serif; text-align: center;
}
.seek { flex: 1; position: relative; border-left: 1px solid #888; margin-top: 3px; padding: 7px 14px 0 12px; }
.trough { height: 22px; border: 1.500px solid #8a8a8a; background: #dfdfdf; }
.fill { height: 100%; background: linear-gradient(#55f900, #36c804); }
.ticks { height: 7px; margin-top: 3px; background: repeating-linear-gradient(90deg, #9a9a9a 0 1.500px, transparent 1.500px 12px); }
.playhead { position: absolute; left: 772px; top: -3px; }

/* Desktop taskbar */
.taskbar { display: flex; background: linear-gradient(90deg, #22383f, #22373f 35%, #1f3141 60%, #1c2a42 80%, #1b2743); color: #fff; }
.sys { width: 71.700px; display: grid; place-items: center; color: #fff; }
.sys + .app { margin-left: 4px; }
.app { width: 75px; flex: none; display: grid; place-items: center; border: solid transparent; border-width: 0 1px; background: linear-gradient(#76b9ed, #76b9ed) 50% 57px / 0 3px no-repeat; background-clip: padding-box; }
.app.open { background-size: 61px 3px; }
.app.active { background-color: #4d5e68; background-size: 100% 3px; }
.tray { display: flex; margin-left: auto; align-items: stretch; }
.tray span { display: grid; place-items: center; }
.tray .weather { display: flex; align-items: center; gap: 12px; width: 107px; font-size: 19.5px; }
.t-chev, .t-slack, .t-battery { width: 36px; }
.t-cam { width: 37px; }
.t-drive { width: 35px; }
.t-wifi { width: 38px; }
.t-speaker { width: 34px; }
.t-keyboard { width: 48px; }
.t-lang { width: 55px; font-size: 16.2px; }
.tray .t-clock { display: block; width: 112px; padding-top: 3px; font-size: 17.5px; line-height: 27.5px; text-align: center; }
.t-note { width: 62px; }
.peek { width: 8px; margin-left: 11px; border-left: 1px solid #74808f; }
```
